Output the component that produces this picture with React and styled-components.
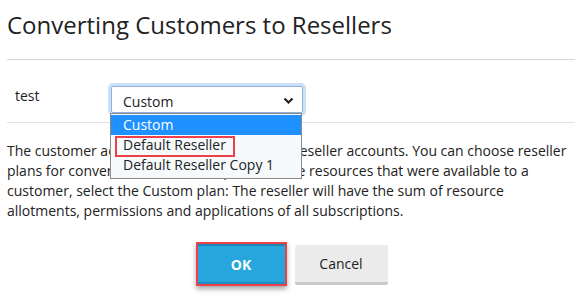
import React from "react";
import styled, {createGlobalStyle} from 'styled-components';

const GlobalStyle = createGlobalStyle`
  html, body {
    margin: 0;
    padding: 0;
    background: #ffffff;
  }
  body {
    font-family: "Open Sans", "Noto Sans", sans-serif;
    color: #222222;
  }
`

const StyledPage = styled.div`
  width: 582px;
  height: 304px;
  box-sizing: border-box;
  padding: 8px 7px 0 7px;
  overflow: hidden;
`

const Title = styled.h1`
  margin: 0;
  font-size: 24px;
  font-weight: 400;
  line-height: 34px;
  color: #222222;
  padding-bottom: 17px;
  border-bottom: 1px solid #d4d4da;
`

const FormRow = styled.div`
  display: flex;
  align-items: flex-start;
  height: 63px;
  box-sizing: border-box;
  padding-top: 26px;
  border-bottom: 1px solid #e2e2e6;
  position: relative;
`

const Label = styled.div`
  width: 96px;
  padding-left: 8px;
  box-sizing: border-box;
  font-size: 14px;
  line-height: 20px;
`

const SelectWrap = styled.div`
  position: relative;
  margin-left: 8px;
`

const SelectBox = styled.div`
  width: 192px;
  height: 27px;
  box-sizing: border-box;
  border: 1px solid #8fb2d6;
  border-radius: 2px;
  box-shadow: 0 0 0 3px #c9e1f8;
  background: #ffffff;
  display: flex;
  align-items: center;
  justify-content: space-between;
  padding: 3px 8px 0 11px;
  font-size: 14px;
  color: #222222;
`

const OptionList = styled.div`
  position: absolute;
  left: -1px;
  top: 27px;
  width: 192px;
  box-sizing: border-box;
  border: 1px solid #8a8a8a;
  background: #f7fafd;
  padding: 1px 0 3px;
  z-index: 2;
`

const Option = styled.div`
  height: 20px;
  line-height: 20px;
  padding-left: 12px;
  font-size: 14px;
  color: ${props => props.$selected ? '#ffffff' : '#222222'};
  background: ${props => props.$selected ? '#1e90ff' : 'transparent'};
  position: relative;
`

const Highlight = styled.span`
  position: absolute;
  left: 4px;
  top: 1px;
  width: 120px;
  height: 21px;
  box-sizing: border-box;
  border: 2px solid #ec4148;
`

const Description = styled.p`
  margin: 18px 0 0;
  font-size: 14px;
  line-height: 20px;
  color: #222222;
  white-space: nowrap;
`

const ButtonBar = styled.div`
  display: flex;
  justify-content: center;
  align-items: flex-start;
  gap: 8px;
  margin-top: 21px;
  padding-left: 1px;
`

const Outline = styled.div`
  border: 2px solid #ec4148;
  box-shadow: 0 3px 5px rgba(0, 0, 0, 0.35);
`

const Button = styled.button`
  height: 40px;
  border: none;
  font-family: "Open Sans", "Noto Sans", sans-serif;
  font-size: 14px;
  cursor: pointer;
  display: block;
  box-sizing: border-box;
  width: ${props => props.$primary ? '87px' : '93px'};
  font-weight: ${props => props.$primary ? 700 : 400};
  color: ${props => props.$primary ? '#ffffff' : '#222222'};
  background: ${props => props.$primary ? '#26a6dc' : '#ebebeb'};
  border-top: ${props => props.$primary ? '2px solid #1a86b8' : '0'};
  border-bottom: ${props => props.$primary ? '2px solid #1d8fc2' : '3px solid #c9c9c9'};
  border-radius: ${props => props.$primary ? '0' : '2px'};
  margin-top: ${props => props.$primary ? '0' : '3px'};
  padding: 0;
`

const Chevron = () => (
    <svg width="11" height="8" viewBox="0 0 11 8">
        <path d="M1.5 1.5 L5.5 5.5 L9.5 1.5" fill="none" stroke="#222" strokeWidth="2.2"/>
    </svg>
)

const App = () => {
    return (
        <StyledPage>
            <GlobalStyle/>
            <Title>Converting Customers to Resellers</Title>
            <FormRow>
                <Label>test</Label>
                <SelectWrap>
                    <SelectBox>
                        <span>Custom</span>
                        <Chevron/>
                    </SelectBox>
                    <OptionList>
                        <Option $selected>Custom</Option>
                        <Option>Default Reseller<Highlight/></Option>
                        <Option>Default Reseller Copy 1</Option>
                    </OptionList>
                </SelectWrap>
            </FormRow>
            <Description>
                The customer accounts will be converted to reseller accounts. You can choose reseller<br/>
                plans for converted accounts. To preserve the resources that were available to a<br/>
                customer, select the Custom plan: The reseller will have the sum of resource<br/>
                allotments, permissions and applications of all subscriptions.
            </Description>
            <ButtonBar>
                <Outline>
                    <Button $primary>OK</Button>
                </Outline>
                <Button>Cancel</Button>
            </ButtonBar>
        </StyledPage>
    )
}

export default App
